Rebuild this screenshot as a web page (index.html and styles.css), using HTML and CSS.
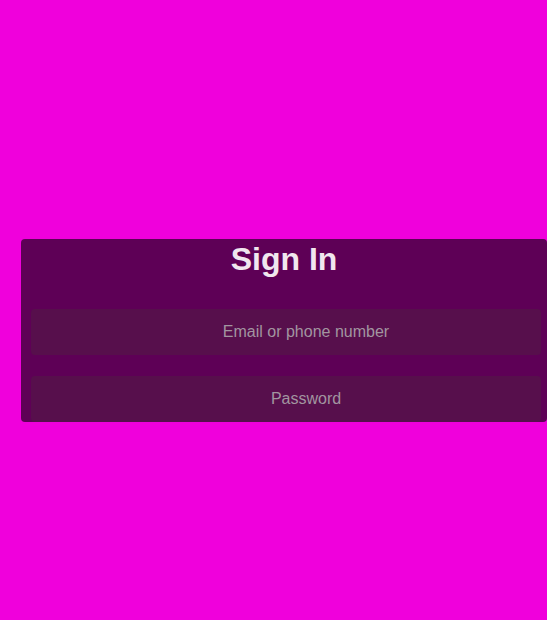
FILE: index.html
```html
<!DOCTYPE html>
<html>
<head>
<meta charset="utf-8">
<link rel="stylesheet" href="styles.css">
</head>
<body>
<div class="page">
  <form class="panel">
    <h1 class="title">Sign In</h1>
    <input class="field" type="text" placeholder="Email or phone number">
    <input class="field" type="password" placeholder="Password">
  </form>
</div>
</body>
</html>
```
FILE: styles.css
```css
html, body {
  margin: 0;
  padding: 0;
  background: #f000dc;
}
.page {
  min-height: 620px;
  padding-top: 239px;
  padding-left: 21px;
  box-sizing: border-box;
}
.panel {
  width: 526px;
  background: #5e0056;
  border-radius: 4px;
  display: flex;
  flex-direction: column;
  align-items: flex-start;
  margin: 0;
}
.title {
  align-self: stretch;
  margin: 2px 0 31px;
  font-family: "Liberation Sans", Arial, sans-serif;
  font-weight: bold;
  font-size: 32px;
  line-height: 37px;
  text-align: center;
  color: #f1e6ef;
}
.field {
  margin: 0 0 21px 10px;
  width: 510px;
  height: 46px;
  box-sizing: border-box;
  border: none;
  border-radius: 4px;
  background: #570f4c;
  padding: 0 0 0 40px;
  text-align: center;
  font-family: "Liberation Sans", Arial, sans-serif;
  font-size: 16px;
  color: #e0d0dc;
  outline: none;
}
.field:last-child {
  margin-bottom: 0;
}
.field::placeholder {
  color: #a295a0;
  opacity: 1;
}
```
